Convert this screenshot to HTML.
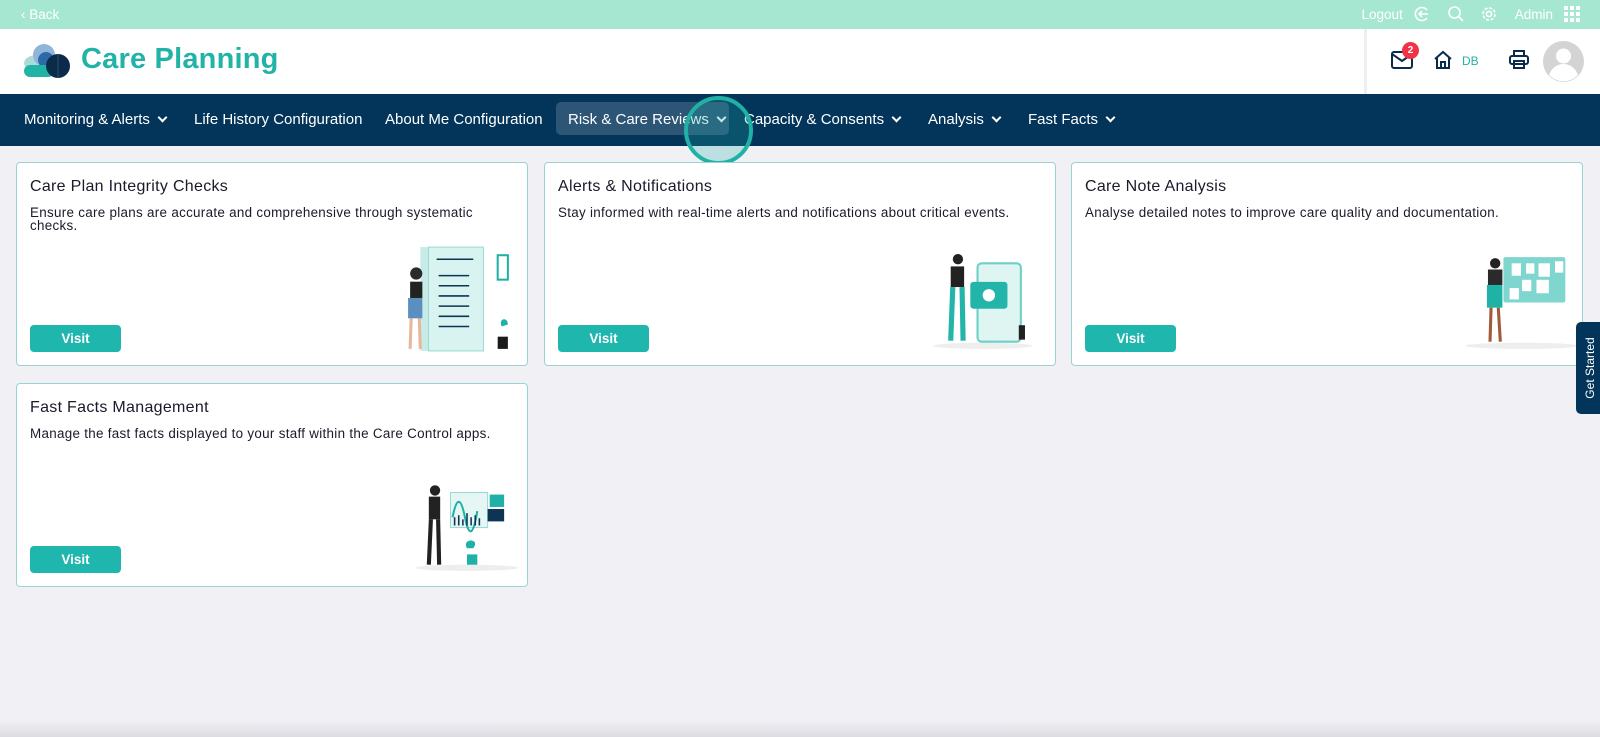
<!DOCTYPE html>
<html><head><meta charset="utf-8"><style>
*{box-sizing:border-box;margin:0;padding:0}
body{width:1600px;height:737px;overflow:hidden;background:#f0f0f5;font-family:"Liberation Sans",sans-serif;position:relative}
.top{height:29px;background:#a6e7d1;color:#fff;font-size:13.5px;position:relative}
.top .back{position:absolute;left:21px;top:7px}
.top .r{position:absolute;right:20px;top:5px;display:flex;align-items:center;gap:11px}
.hdr{height:65px;background:#fff;position:relative}
.hdr .title{position:absolute;left:81px;top:14px;font-size:29px;font-weight:bold;color:#22b3a7;letter-spacing:.2px}
.hdr .sep{position:absolute;left:1364px;top:0;width:3px;height:65px;background:#eeeef3}
.nav{height:52px;background:#03355a;position:relative;color:#fff;font-size:15px}
.nav span{position:absolute;top:17px;white-space:nowrap}
.chev{display:inline-block;width:7px;height:7px;border-right:2px solid #fff;border-bottom:2px solid #fff;transform:rotate(45deg);margin-left:9px;position:relative;top:-3px}
.card{position:absolute;background:#fff;border:1px solid #95d6d4;border-radius:4px;width:512px;height:204px}
.card h3{position:absolute;left:13px;top:15px;font-size:16px;letter-spacing:.3px;font-weight:normal;color:#1a1a2a}
.card p{position:absolute;left:13px;top:43px;width:490px;font-size:13.4px;letter-spacing:.3px;line-height:13px;color:#1a1a2a}
.card .btn{position:absolute;left:13px;top:162px;width:91px;height:27px;background:#1fb7ad;border-radius:4px;color:#fff;font-size:13.5px;font-weight:bold;text-align:center;line-height:27px}
.card svg{position:absolute}
</style></head><body>
<div class="top"><span class="back">‹ Back</span>
<div class="r"><span>Logout</span>
<svg width="16" height="16" viewBox="0 0 16 16" fill="none" stroke="#fff" stroke-width="1.6"><path d="M13 4A6.5 6.5 0 1 0 13 12"/><path d="M14 8H5M8 5L5 8l3 3"/></svg>
<svg width="18" height="18" viewBox="0 0 18 18" fill="none" stroke="#fff" stroke-width="1.6" style="margin-left:6px"><circle cx="7.5" cy="7.5" r="5.5"/><path d="M11.5 11.5L16 16"/></svg>
<svg width="18" height="18" viewBox="0 0 18 18" fill="none" stroke="#fff" stroke-width="1.6" style="margin-left:4px"><circle cx="9" cy="9" r="2.6"/><circle cx="9" cy="9" r="6" stroke-dasharray="3 1.7"/></svg>
<span style="margin-left:6px">Admin</span>
<svg width="16" height="16" viewBox="0 0 16 16" fill="#fff"><rect x="0" y="0" width="4" height="4"/><rect x="6" y="0" width="4" height="4"/><rect x="12" y="0" width="4" height="4"/><rect x="0" y="6" width="4" height="4"/><rect x="6" y="6" width="4" height="4"/><rect x="12" y="6" width="4" height="4"/><rect x="0" y="12" width="4" height="4"/><rect x="6" y="12" width="4" height="4"/><rect x="12" y="12" width="4" height="4"/></svg>
</div></div>
<div class="hdr">
<svg style="position:absolute;left:23px;top:14px" width="48" height="36" viewBox="0 0 48 36"><ellipse cx="14" cy="20" rx="13" ry="8" fill="#a9dcd9"/><circle cx="21" cy="12" r="11" fill="#8fb6d8"/><circle cx="23" cy="17" r="8" fill="#2c6aa8"/><rect x="1" y="22" width="30" height="12" rx="6" fill="#22b3a7"/><circle cx="35" cy="23" r="12" fill="#0c2a4a"/><path d="M35 11v24" stroke="#2c4e70" stroke-width="1"/></svg>
<div class="title">Care Planning</div>
<div class="sep"></div>
<svg style="position:absolute;left:1391px;top:22px" width="22" height="18" viewBox="0 0 22 18" fill="none" stroke="#0c2a4a" stroke-width="2"><rect x="1" y="1" width="20" height="16" rx="2"/><path d="M1 3l10 7 10-7"/></svg>
<div style="position:absolute;left:1402px;top:13px;width:17px;height:17px;border-radius:50%;background:#f03447;color:#fff;font-size:10px;font-weight:bold;text-align:center;line-height:17px">2</div>
<svg style="position:absolute;left:1433px;top:21px" width="20" height="20" viewBox="0 0 20 20" fill="none" stroke="#0c2a4a" stroke-width="2"><path d="M2 9L10 2l8 7M4 8v10h12V8M8 18v-6h4v6"/></svg>
<span style="position:absolute;left:1462px;top:25px;font-size:12px;color:#22b3a7">DB</span>
<svg style="position:absolute;left:1509px;top:21px" width="20" height="20" viewBox="0 0 20 20" fill="none" stroke="#0c2a4a" stroke-width="2"><rect x="5" y="1" width="10" height="5"/><rect x="1" y="6" width="18" height="8" rx="2"/><rect x="5" y="11" width="10" height="7"/></svg>
<svg style="position:absolute;left:1543px;top:12px" width="41" height="41" viewBox="0 0 41 41"><circle cx="20.5" cy="20.5" r="20.5" fill="#d4d4d4"/><circle cx="20.5" cy="15" r="7.5" fill="#fff"/><path d="M6 34c3-8 9-11 14.5-11S32 26 35 34a20 20 0 0 1-29 0z" fill="#fff"/></svg>
</div>
<div class="nav">
<span style="left:24px">Monitoring &amp; Alerts<i class="chev"></i></span>
<span style="left:194px">Life History Configuration</span>
<span style="left:385px">About Me Configuration</span>
<div style="position:absolute;left:556px;top:8px;width:173px;height:33px;background:#2c5576;border-radius:5px"></div>
<span style="left:568px">Risk &amp; Care Reviews<i class="chev"></i></span>
<span style="left:744px">Capacity &amp; Consents<i class="chev"></i></span>
<span style="left:928px">Analysis<i class="chev"></i></span>
<span style="left:1028px">Fast Facts<i class="chev"></i></span>
</div>
<div style="position:absolute;left:684px;top:96px;width:69px;height:69px;border:4px solid #1fb1a6;border-radius:50%;background:rgba(31,177,166,.25)"></div>

<div class="card" style="left:16px;top:162px"><h3>Care Plan Integrity Checks</h3><p style="width:460px">Ensure care plans are accurate and comprehensive through systematic checks.</p><div class="btn">Visit</div>
<svg style="left:380px;top:80px" width="124" height="112" viewBox="0 0 120 110"><rect x="22" y="4" width="62" height="102" fill="#c7ece8"/><rect x="30" y="4" width="54" height="102" fill="#d9f3f0" stroke="#9ad9d2"/><path d="M38 16h36M40 32h30M40 42h30M40 52h30M40 62h30M40 72h30M40 82h30" stroke="#0c3555" stroke-width="1.5"/><rect x="98" y="12" width="10" height="24" fill="none" stroke="#1fb1a6" stroke-width="2"/><path d="M102 82c-4-8 6-10 6-2" fill="#1fb1a6"/><rect x="98" y="92" width="10" height="12" fill="#1a1a1a"/><circle cx="18" cy="30" r="6" fill="#2b2b2b"/><rect x="12" y="38" width="12" height="16" fill="#222"/><rect x="10" y="54" width="14" height="20" fill="#5a8fbf"/><path d="M13 74l-1 30M21 74l1 30" stroke="#e8b79b" stroke-width="3"/></svg></div>

<div class="card" style="left:544px;top:162px"><h3>Alerts &amp; Notifications</h3><p>Stay informed with real-time alerts and notifications about critical events.</p><div class="btn">Visit</div>
<svg style="left:386px;top:90px" width="124" height="98" viewBox="0 0 120 95"><ellipse cx="50" cy="90" rx="48" ry="3" fill="#eee"/><rect x="45" y="10" width="42" height="76" rx="4" fill="#dff5f2" stroke="#6cd0c6" stroke-width="2"/><rect x="38" y="28" width="36" height="26" rx="3" fill="#23b5aa"/><circle cx="56" cy="41" r="6" fill="#fff"/><circle cx="26" cy="6" r="5" fill="#222"/><rect x="19" y="13" width="13" height="20" fill="#222"/><path d="M21 33l-2 52M30 33l1 52" stroke="#23b5aa" stroke-width="5"/><path d="M88 70v14" stroke="#222" stroke-width="6"/></svg></div>

<div class="card" style="left:1071px;top:162px"><h3>Care Note Analysis</h3><p>Analyse detailed notes to improve care quality and documentation.</p><div class="btn">Visit</div>
<svg style="left:388px;top:90px" width="124" height="98" viewBox="0 0 120 95"><ellipse cx="60" cy="90" rx="55" ry="3" fill="#eee"/><rect x="42" y="4" width="60" height="44" rx="2" fill="#7fd6cf"/><rect x="50" y="10" width="9" height="12" fill="#fff"/><rect x="64" y="10" width="8" height="10" fill="#fff"/><rect x="76" y="10" width="11" height="13" fill="#fff"/><rect x="92" y="8" width="8" height="11" fill="#fff"/><rect x="60" y="26" width="9" height="11" fill="#fff"/><rect x="74" y="26" width="12" height="13" fill="#fff"/><rect x="48" y="34" width="9" height="11" fill="#fff"/><circle cx="34" cy="10" r="5" fill="#222"/><rect x="27" y="16" width="14" height="15" fill="#2a2a2a"/><rect x="26" y="31" width="15" height="22" fill="#1eb3a6"/><path d="M30 53l-1 33M37 53l2 33" stroke="#a25a3a" stroke-width="3"/></svg></div>

<div class="card" style="left:16px;top:383px"><h3>Fast Facts Management</h3><p>Manage the fast facts displayed to your staff within the Care Control apps.</p><div class="btn">Visit</div>
<svg style="left:388px;top:92px" width="124" height="98" viewBox="0 0 120 95"><ellipse cx="60" cy="89" rx="50" ry="3" fill="#eee"/><rect x="44" y="16" width="36" height="34" fill="#e6f6f4" stroke="#9ad9d2"/><path d="M46 40q6-30 12 0t12-6" fill="none" stroke="#1fb1a6" stroke-width="2"/><path d="M48 48v-8M52 48v-10M56 48v-6M60 48v-12M64 48v-8M68 48v-10M72 48v-7" stroke="#0c3555" stroke-width="1.5"/><rect x="82" y="18" width="14" height="12" fill="#1fb1a6"/><rect x="80" y="32" width="16" height="12" fill="#0c3555"/><circle cx="29" cy="14" r="5" fill="#222"/><rect x="23" y="20" width="11" height="22" fill="#222"/><path d="M25 42l-2 44M32 42l1 44" stroke="#222" stroke-width="4"/><path d="M60 70c-6-10 14-10 6 0" fill="#1fb1a6"/><rect x="60" y="76" width="10" height="10" fill="#1fb1a6"/></svg></div>

<div style="position:absolute;left:1576px;top:322px;width:30px;height:92px;background:#03355a;border-radius:5px 0 0 5px"></div>
<div style="position:absolute;left:1545px;top:359px;width:90px;height:18px;transform:rotate(-90deg);color:#fff;font-size:12px;text-align:center;line-height:18px">Get Started</div>
<div style="position:absolute;left:0;top:720px;width:1600px;height:17px;background:linear-gradient(#f0f0f5,#dcdce2)"></div>
</body></html>
